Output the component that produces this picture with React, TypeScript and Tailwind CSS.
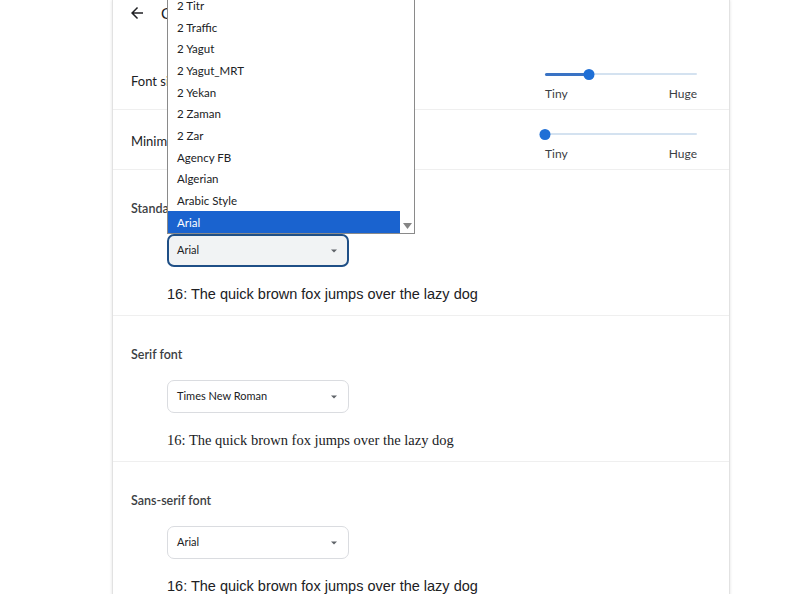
import { useState } from "react";

const fontOptions = [
    "2 Titr",
    "2 Traffic",
    "2 Yagut",
    "2 Yagut_MRT",
    "2 Yekan",
    "2 Zaman",
    "2 Zar",
    "Agency FB",
    "Algerian",
    "Arabic Style",
    "Arial",
];

const ui = { fontFamily: 'Lato, "Noto Sans", sans-serif' };

function Caret() {
    return (
        <svg width="10" height="10" viewBox="0 0 10 10" className="text-[#5f6368]">
            <path d="M2 3.5h6L5 6.5z" fill="currentColor" />
        </svg>
    );
}

function SliderRow({ label, value }: { label: string; value: number }) {
    return (
        <div className="h-[60px] border-b border-[#efefef] flex justify-between pl-[18px] pr-[32px]">
            <div className="text-[13px] text-[#202124] self-center pt-[4px]">{label}</div>
            <div className="w-[152px] pt-[19px] flex flex-col">
                <div className="relative h-[10px] flex items-center">
                    <div className="w-full h-[2px] bg-[#d4e2f0] rounded-full" />
                    <div
                        className="absolute left-0 h-[3px] bg-[#3a73c4] rounded-full"
                        style={{ width: `${value * 100}%` }}
                    />
                    <div
                        className="absolute w-[11px] h-[11px] rounded-full bg-[#1f6fd6] -translate-x-1/2"
                        style={{ left: `${value * 100}%` }}
                    />
                </div>
                <div className="flex justify-between text-[12px] text-[#3c4043] mt-[7px] leading-[16px]">
                    <span>Tiny</span>
                    <span>Huge</span>
                </div>
            </div>
        </div>
    );
}

function FontSection({
    label,
    value,
    serif,
    focused,
}: {
    label: string;
    value: string;
    serif?: boolean;
    focused?: boolean;
}) {
    return (
        <div className="border-b border-[#efefef] pt-[30px] pb-[11px] pl-[18px]">
            <div className="text-[12.5px] font-semibold text-[#3c4043] leading-[18px]">{label}</div>
            <div className="pl-[36px]">
                <div
                    className={
                        focused
                            ? "mt-[16px] w-[182px] h-[33px] rounded-[7px] border-2 border-[#1f4f86] bg-[#f1f3f4] flex items-center justify-between pl-[8px] pr-[8px]"
                            : "mt-[16px] w-[182px] h-[33px] rounded-[7px] border border-[#dadce0] bg-white flex items-center justify-between pl-[9px] pr-[9px]"
                    }
                >
                    <span className="text-[11px] text-[#202124]">{value}</span>
                    <Caret />
                </div>
                <div
                    className="mt-[17px] text-[14.5px] leading-[20px] text-[#202124]"
                    style={{ fontFamily: serif ? '"Liberation Serif", serif' : '"Liberation Sans", sans-serif' }}
                >
                    16: The quick brown fox jumps over the lazy dog
                </div>
            </div>
        </div>
    );
}

export default function App() {
    const [selected] = useState("Arial");

    return (
        <div className="relative h-[594px] overflow-hidden bg-white" style={ui}>
            <div className="ml-[112px] w-[618px] min-h-[594px] bg-white border-x border-[#e2e2e2] shadow-[0_0_3px_rgba(0,0,0,0.12)]">
                <div className="h-[50px] flex items-start pl-[15px] pt-[4px] gap-[15px]">
                    <svg width="18" height="18" viewBox="0 0 24 24" className="text-[#202124]">
                        <path d="M20 11H7.83l5.59-5.59L12 4l-8 8 8 8 1.41-1.41L7.83 13H20v-2z" fill="currentColor" />
                    </svg>
                    <span className="text-[15px] text-[#202124] leading-[18px]">Customize fonts</span>
                </div>
                <SliderRow label="Font size" value={0.29} />
                <SliderRow label="Minimum font size" value={0} />
                <FontSection label="Standard font" value={selected} focused />
                <FontSection label="Serif font" value="Times New Roman" serif />
                <FontSection label="Sans-serif font" value="Arial" />
            </div>

            {/* open native-looking select list */}
            <div className="absolute left-[167px] top-[-6px] w-[248px] h-[240px] bg-white border border-[#8a8a8a] flex">
                <div className="flex-1 flex flex-col">
                    {fontOptions.map((name) => (
                        <div
                            key={name}
                            className={
                                name === selected
                                    ? "h-[21.8px] flex items-center pl-[9px] text-[11.5px] bg-[#1a63cf] text-white"
                                    : "h-[21.8px] flex items-center pl-[9px] text-[11.5px] text-[#202124]"
                            }
                        >
                            {name}
                        </div>
                    ))}
                </div>
                <div className="w-[14px] flex flex-col justify-end items-center pb-[3px]">
                    <svg width="9" height="7" viewBox="0 0 9 7">
                        <path d="M0 0h9L4.5 6z" fill="#858585" />
                    </svg>
                </div>
            </div>
        </div>
    );
}
